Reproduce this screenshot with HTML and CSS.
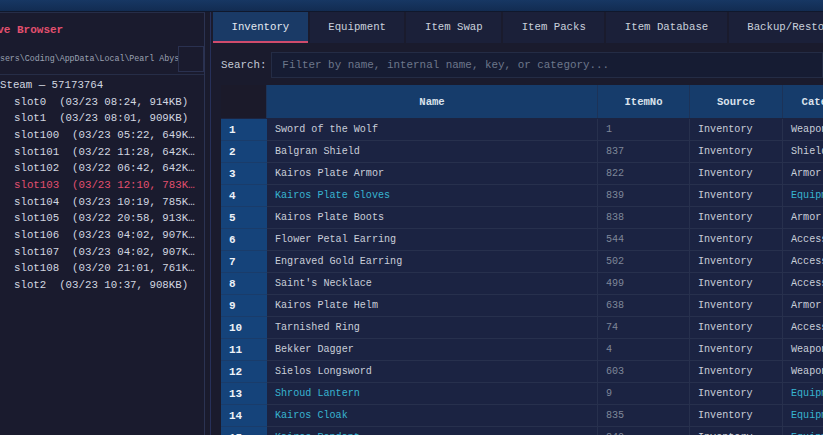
FILE: index.html
```html
<!doctype html>
<html lang='en'>
<head>
<meta charset='UTF-8'>
<title>Save Editor</title>
<link rel="stylesheet" href="styles.css">
</head>
<body>
<div class='titlebar'></div>
<div class='main'>
  <aside class='browser'>
    <h2 class='browser-title'>Save Browser</h2>
    <div class='path-row'>
      <div class='path'>C:\Users\Coding\AppData\Local\Pearl Abyss\CD\save</div>
      <div class='path-btn'></div>
    </div>
    <ul class='tree'>
      <li class='account'>Steam — 57173764</li>
      <li>slot0  (03/23 08:24, 914KB)</li>
      <li>slot1  (03/23 08:01, 909KB)</li>
      <li>slot100  (03/23 05:22, 649KB)</li>
      <li>slot101  (03/22 11:28, 642KB)</li>
      <li>slot102  (03/22 06:42, 642KB)</li>
      <li class='active'>slot103  (03/23 12:10, 783KB)</li>
      <li>slot104  (03/23 10:19, 785KB)</li>
      <li>slot105  (03/22 20:58, 913KB)</li>
      <li>slot106  (03/23 04:02, 907KB)</li>
      <li>slot107  (03/23 04:02, 907KB)</li>
      <li>slot108  (03/20 21:01, 761KB)</li>
      <li>slot2  (03/23 10:37, 908KB)</li>
    </ul>
  </aside>

  <section class='editor'>
    <nav class='tabs'>
      <span class='tab selected'>Inventory</span>
      <span class='tab'>Equipment</span>
      <span class='tab'>Item Swap</span>
      <span class='tab'>Item Packs</span>
      <span class='tab'>Item Database</span>
      <span class='tab'>Backup/Restore</span>
    </nav>

    <div class='search'>
      <label>Search:</label>
      <div class='search-input'>Filter by name, internal name, key, or category...</div>
    </div>

    <table class='items'>
      <tr>
        <th class='corner'></th>
        <th class='c-name'>Name</th>
        <th class='c-no'>ItemNo</th>
        <th class='c-src'>Source</th>
        <th class='c-cat'>Category</th>
        <th>Key</th>
      </tr>
      <tr><td class='num'>1</td><td>Sword of the Wolf</td><td class='no'>1</td><td>Inventory</td><td>Weapon</td><td></td></tr>
      <tr><td class='num'>2</td><td>Balgran Shield</td><td class='no'>837</td><td>Inventory</td><td>Shield</td><td></td></tr>
      <tr><td class='num'>3</td><td>Kairos Plate Armor</td><td class='no'>822</td><td>Inventory</td><td>Armor</td><td></td></tr>
      <tr class='equip'><td class='num'>4</td><td>Kairos Plate Gloves</td><td class='no'>839</td><td class='src'>Inventory</td><td>Equipment</td><td></td></tr>
      <tr><td class='num'>5</td><td>Kairos Plate Boots</td><td class='no'>838</td><td>Inventory</td><td>Armor</td><td></td></tr>
      <tr><td class='num'>6</td><td>Flower Petal Earring</td><td class='no'>544</td><td>Inventory</td><td>Accessory</td><td></td></tr>
      <tr><td class='num'>7</td><td>Engraved Gold Earring</td><td class='no'>502</td><td>Inventory</td><td>Accessory</td><td></td></tr>
      <tr><td class='num'>8</td><td>Saint's Necklace</td><td class='no'>499</td><td>Inventory</td><td>Accessory</td><td></td></tr>
      <tr><td class='num'>9</td><td>Kairos Plate Helm</td><td class='no'>638</td><td>Inventory</td><td>Armor</td><td></td></tr>
      <tr><td class='num'>10</td><td>Tarnished Ring</td><td class='no'>74</td><td>Inventory</td><td>Accessory</td><td></td></tr>
      <tr><td class='num'>11</td><td>Bekker Dagger</td><td class='no'>4</td><td>Inventory</td><td>Weapon</td><td></td></tr>
      <tr><td class='num'>12</td><td>Sielos Longsword</td><td class='no'>603</td><td>Inventory</td><td>Weapon</td><td></td></tr>
      <tr class='equip'><td class='num'>13</td><td>Shroud Lantern</td><td class='no'>9</td><td class='src'>Inventory</td><td>Equipment</td><td></td></tr>
      <tr class='equip'><td class='num'>14</td><td>Kairos Cloak</td><td class='no'>835</td><td class='src'>Inventory</td><td>Equipment</td><td></td></tr>
      <tr class='equip'><td class='num'>15</td><td>Kairos Pendant</td><td class='no'>840</td><td class='src'>Inventory</td><td>Equipment</td><td></td></tr>
    </table>
  </section>
</div>
</body>
</html>
```

FILE: styles.css
```css
html, body {
  margin: 0;
  width: 823px;
  height: 435px;
  overflow: hidden;
  background: #1a1b2d;
  font-family: "Liberation Mono", "DejaVu Sans Mono", monospace;
  color: #d2d7e0;
}
.titlebar {
  height: 11px;
  background: linear-gradient(#173763, #122c52);
  border-bottom: 1px solid #10182c;
}
.main {
  display: flex;
  height: 423px;
}

/* left: save browser */
.browser {
  width: 204px;
  flex: none;
  border-right: 1px solid #2b3352;
  border-top: 1px solid #262d48;
  overflow: hidden;
  background: #1a1b2e;
}
.browser-title {
  margin: 10px 0 0 -16px;
  font-size: 11px;
  font-weight: bold;
  color: #e2506f;
  line-height: 14px;
}
.path-row {
  display: flex;
  margin-top: 9px;
  height: 28px;
  border-bottom: 1px solid #262d47;
}
.path {
  flex: 1;
  overflow: hidden;
  white-space: nowrap;
  font-size: 8.3px;
  line-height: 26px;
  color: #9aa2b2;
  text-indent: -20px;
}
.path-btn {
  width: 26px;
  height: 26px;
  border: 1px solid #2a3150;
  box-sizing: border-box;
}
.tree {
  list-style: none;
  margin: 0;
  padding: 2px 0 0;
  font-size: 10.75px;
  line-height: 16.67px;
}
.tree li {
  white-space: pre;
  overflow: hidden;
  text-overflow: ellipsis;
  padding-left: 14px;
  width: 185px;
}
.tree li.account {
  padding-left: 0;
}
.tree li.active {
  color: #e2506f;
}

/* right: editor */
.editor {
  flex: 1;
  margin-left: 5px;
  border-left: 1px solid #26305a;
  padding-left: 2px;
  overflow: hidden;
}
.tabs {
  display: flex;
  gap: 2px;
  height: 31px;
  white-space: nowrap;
}
.tab {
  padding: 2px 18.5px 0;
  line-height: 27px;
  font-size: 10.7px;
  background: #1b2039;
  color: #c9d0dc;
  border-bottom: 2px solid #1b2039;
}
.tab.selected {
  background: #1a3a66;
  color: #e4e9f1;
  border-bottom-color: #cf4b6c;
}
.search {
  display: flex;
  align-items: center;
  margin: 9px 0 0 8px;
  gap: 5px;
}
.search label {
  font-size: 10.8px;
  color: #c3cad6;
}
.search-input {
  flex: 1;
  height: 26px;
  box-sizing: border-box;
  background: #161c33;
  border: 1px solid #242c45;
  padding-left: 10px;
  font-size: 10.9px;
  line-height: 24px;
  color: #6d778b;
  white-space: nowrap;
  overflow: hidden;
}
.items {
  margin: 7px 0 0 8px;
  border-collapse: collapse;
  table-layout: fixed;
  width: 900px;
  font-size: 10.1px;
  white-space: nowrap;
}
.items th {
  height: 33px;
  padding: 0;
  background: #163c6b;
  color: #dbe2ec;
  font-weight: bold;
  font-size: 10.6px;
  border-right: 1px solid #1c3358;
  border-bottom: 1px solid #1c2440;
  overflow: hidden;
}
.items th.corner {
  width: 45px;
  background: #1b1a2a;
}
.items th.c-name { width: 330px; }
.items th.c-no { width: 91px; }
.items th.c-src { width: 92px; }
.items th.c-cat { width: 88px; }
.items td {
  height: 21px;
  padding: 0 0 0 8px;
  background: #1b2342;
  color: #c9ced9;
  border-right: 1px solid #27304d;
  border-bottom: 1px solid #27304d;
  overflow: hidden;
}
.items td.num {
  background: #15437a;
  color: #eef2f8;
  font-weight: bold;
  font-size: 11px;
  border-right-color: #15437a;
  border-bottom-color: #1a3c6a;
}
.items td.no {
  color: #7f8799;
}
.items tr.equip td {
  color: #38b4d0;
}
.items tr.equip td.num {
  color: #eef2f8;
}
.items tr.equip td.no {
  color: #7f8799;
}
.items tr.equip td.src {
  color: #c9ced9;
}
```
